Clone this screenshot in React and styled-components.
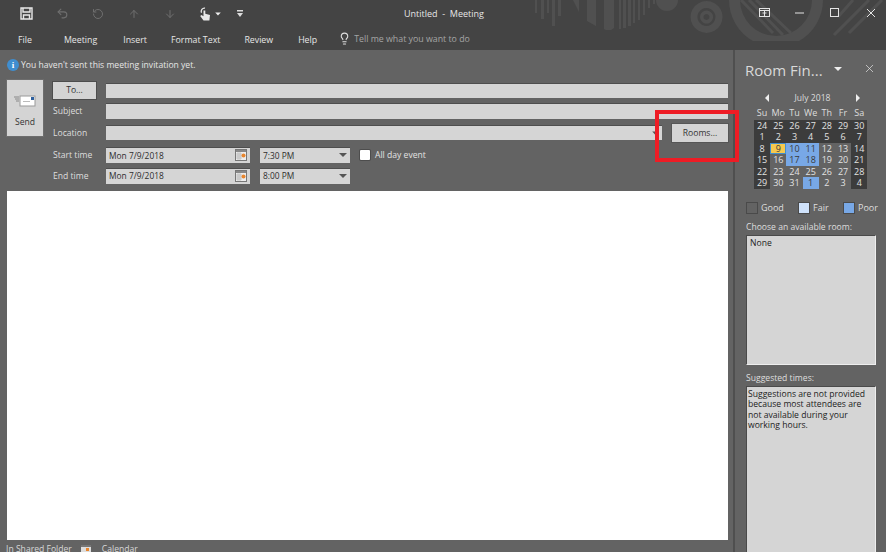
import React from "react";
import styled, { createGlobalStyle } from "styled-components";
import { ArrowUp, ArrowDown, Lightbulb, RotateCcw, Undo2, X } from "lucide-react";

const GlobalStyle = createGlobalStyle`
  html, body { margin: 0; padding: 0; background: #636363; }
  * { box-sizing: border-box; }
`;

const Window = styled.div`
  position: relative;
  width: 886px;
  height: 552px;
  overflow: hidden;
  display: flex;
  flex-direction: column;
  background: #636363;
  color: #e2e2e2;
  font-family: "Open Sans", "Noto Sans", sans-serif;
  font-size: 8.6px;
`;

const TitleBar = styled.div`
  position: relative;
  height: 27px;
  flex-shrink: 0;
  background: #444444;
  display: flex;
  align-items: center;
  padding-left: 19px;
`;

const QuickIcon = styled.span`
  position: relative;
  z-index: 1;
  display: flex;
  align-items: center;
  justify-content: center;
  width: ${(p) => p.$w || 36}px;
  margin-left: ${(p) => p.$ml || 0}px;
  color: ${(p) => (p.$off ? "#6f6f6f" : "#e4e4e4")};
`;

const Title = styled.div`
  position: absolute;
  left: 404px;
  top: 8px;
  font-size: 9px;
  line-height: 12px;
  color: #e6e6e6;
  white-space: pre;
`;

const Decoration = styled.svg`
  position: absolute;
  left: 530px;
  top: 0;
`;

const WindowButtons = styled.div`
  position: absolute;
  top: 5px;
  left: 757px;
  display: flex;
  color: #dcdcdc;
`;

const WindowButton = styled.span`
  width: 35.5px;
  height: 15px;
  display: flex;
  align-items: center;
  justify-content: flex-start;
  padding-left: 2px;
`;

const TabBar = styled.div`
  height: 23px;
  flex-shrink: 0;
  background: #444444;
  display: flex;
  align-items: center;
  padding-left: 18px;
  font-size: 8.8px;
`;

const Tab = styled.span`
  margin-right: ${(p) => p.$mr}px;
  color: #e6e6e6;
  position: relative;
  top: ${(p) => p.$top || 1}px;
`;

const TellMe = styled.span`
  display: flex;
  align-items: center;
  gap: 3px;
  color: #a5a5a5;
  svg { color: #e0e0e0; }
`;

const Main = styled.div`
  flex: 1;
  display: flex;
  min-height: 0;
`;

const Composer = styled.div`
  width: 733px;
  padding: 8px 5px 0 7px;
  display: flex;
  flex-direction: column;
  > * { flex-shrink: 0; }
`;

const Notice = styled.div`
  height: 14px;
  display: flex;
  align-items: center;
  gap: 2px;
  color: #e6e6e6;
`;

const InfoDot = styled.span`
  width: 12px;
  height: 12px;
  border-radius: 50%;
  background: #3f8ed0;
  color: #fff;
  font: bold 9px/12px "Liberation Serif", serif;
  text-align: center;
`;

const FormArea = styled.div`
  display: flex;
  gap: 10px;
  margin-top: 8px;
  height: 110px;
`;

const SendButton = styled.div`
  width: 36px;
  height: 56px;
  background: #d4d4d4;
  color: #333;
  display: flex;
  flex-direction: column;
  align-items: center;
  padding-top: 15px;
  gap: 9px;
  box-shadow: 0 0 0 1px #6d6d6d;
`;

const Rows = styled.div`
  flex: 1;
  display: flex;
  flex-direction: column;
`;

const Row = styled.div`
  height: ${(p) => p.$h}px;
  display: flex;
  align-items: center;
`;

const FieldLabel = styled.span`
  width: 53px;
  color: #dedede;
`;

const ToButton = styled.div`
  width: 43px;
  height: 17px;
  margin-right: 10px;
  background: #d4d4d4;
  color: #333;
  text-align: center;
  line-height: 16px;
  box-shadow: 0 0 0 1px #4d4d4d;
`;

const Input = styled.div`
  flex: ${(p) => (p.$w ? "none" : 1)};
  width: ${(p) => (p.$w ? `${p.$w}px` : "auto")};
  height: ${(p) => p.$h || 15}px;
  background: #d5d5d5;
  color: #2e2e2e;
  border-top: 1px solid #4e4e4e;
  display: flex;
  align-items: center;
  justify-content: space-between;
  padding: 0 3px 1px;
  font-size: 8.4px;
  margin-right: ${(p) => p.$mr || 0}px;
`;

const RoomsButton = styled.div`
  width: 56px;
  height: 18px;
  background: #d4d4d4;
  color: #333;
  text-align: center;
  line-height: 19px;
  box-shadow: 0 0 0 1px #565656;
`;

const Caret = styled.span`
  width: 0;
  height: 0;
  border-left: 4px solid transparent;
  border-right: 4px solid transparent;
  border-top: 4px solid #555;
`;

const CheckBox = styled.span`
  width: 10px;
  height: 10px;
  background: #fff;
  border-radius: 1px;
  box-shadow: 0 0 0 1px #4d4d4d;
  margin-right: 5px;
`;

const Body = styled.div`
  width: 721px;
  height: 349px;
  margin-top: 1px;
  background: #fff;
`;

const StatusBar = styled.div`
  display: flex;
  align-items: center;
  height: 12px;
  margin-top: 3px;
  margin-left: -1px;
  color: #d8d8d8;
  gap: 9px;
`;

const CalendarLabel = styled.span`
  margin-left: 2px;
`;

const Side = styled.div`
  flex: 1;
  border-left: 2px solid #4f4f4f;
  padding: 0 10px 0 10px;
  display: flex;
  flex-direction: column;
  > * { flex-shrink: 0; }
`;

const SideHead = styled.div`
  height: 38px;
  padding-top: 2px;
  display: flex;
  align-items: center;
  font-size: 15px;
  color: #d9d9d9;
  white-space: nowrap;
`;

const SideActions = styled.span`
  display: flex;
  align-items: center;
  gap: 21px;
  color: #e6e6e6;
  margin: -3px 0 0 11px;
`;

const WhiteCaret = styled.span`
  width: 0;
  height: 0;
  border-left: 4px solid transparent;
  border-right: 4px solid transparent;
  border-top: 4px solid #eee;
`;

const MonthNav = styled.div`
  height: 15px;
  margin: 2px 0 3px 9px;
  width: 113px;
  display: flex;
  align-items: center;
  justify-content: space-between;
  padding: 0 7px 0 11px;
  color: #dcdcdc;
`;

const NavArrow = styled.span`
  width: 0;
  height: 0;
  border-top: 4px solid transparent;
  border-bottom: 4px solid transparent;
  ${(p) => (p.$right ? "border-left: 4px solid #eee;" : "border-right: 4px solid #eee;")}
`;

const CalGrid = styled.div`
  margin-left: 9px;
  width: 114px;
  display: grid;
  grid-template-columns: repeat(7, 16.2px);
  grid-auto-rows: 11.5px;
  text-align: center;
  line-height: 11.5px;
  font-size: 9px;
`;

const WeekDay = styled.span`
  color: #dedede;
  margin-top: -1px;
`;

const cellBg = { dark: "#3c3c3c", grey: "#636363", blue: "#78a8e6", today: "#f5c94f" };
const cellFg = { dark: "#e2e2e2", grey: "#e2e2e2", blue: "#3a3a3a", today: "#3a3a3a" };

const Cell = styled.span`
  background: ${(p) => cellBg[p.$kind]};
  color: ${(p) => cellFg[p.$kind]};
  ${(p) => p.$kind === "today" && "box-shadow: inset 0 0 0 1px #3f8ed0;"}
`;

const Legend = styled.div`
  display: flex;
  align-items: center;
  height: 14px;
  margin-top: 12px;
  margin-left: 1px;
  font-size: 9px;
`;

const Swatch = styled.span`
  width: 12px;
  height: 12px;
  background: ${(p) => p.$bg};
  border: 1px solid #4a4a4a;
  margin-right: ${(p) => p.$gap}px;
`;

const LegendText = styled.span`
  width: ${(p) => p.$w}px;
  color: #dedede;
`;

const SideLabel = styled.div`
  height: 12px;
  line-height: 12px;
  color: #dedede;
  margin-top: ${(p) => p.$mt}px;
  margin-left: 1px;
`;

const ListBox = styled.div`
  height: ${(p) => p.$h}px;
  width: 130px;
  margin-top: 2px;
  margin-left: 1px;
  background: #d5d5d5;
  color: #222;
  border: 1px solid #4a4a4a;
  border-right-color: #eee;
  border-bottom-color: #eee;
  padding: ${(p) => p.$pad};
  line-height: 10.5px;
`;

const Highlight = styled.div`
  position: absolute;
  left: 655px;
  top: 110px;
  width: 84px;
  height: 52px;
  border: 4px solid #ee1c25;
`;

const CalIcon = () => (
  <svg width="12" height="12" viewBox="0 0 12 12">
    <rect x="0.5" y="0.5" width="11" height="11" fill="#eee" stroke="#777" />
    <rect x="1" y="1" width="10" height="2" fill="#888" />
    <path d="M1 5h6M1 7h6M1 9h6M3 3v8M5 3v8" stroke="#aaa" strokeWidth="0.6" />
    <circle cx="8.5" cy="6.5" r="2" fill="#e8862e" />
  </svg>
);

const weeks = [
  [24, 25, 26, 27, 28, 29, 30],
  [1, 2, 3, 4, 5, 6, 7],
  [8, 9, 10, 11, 12, 13, 14],
  [15, 16, 17, 18, 19, 20, 21],
  [22, 23, 24, 25, 26, 27, 28],
  [29, 30, 31, 1, 2, 3, 4],
];

const kindOf = (r, c) => {
  if (r < 2 || c === 0 || c === 6) return "dark";
  if (r === 2 && c === 1) return "today";
  if ((r === 2 || r === 3) && (c === 2 || c === 3)) return "blue";
  if (r === 5 && c === 3) return "blue";
  return "grey";
};

const App = () => (
  <Window>
    <GlobalStyle />
    <TitleBar>
      <Decoration width="356" height="50" viewBox="0 0 356 50" fill="#505050">
        <path d="M5 0h2v13H5zM11 0h3v19h-3zM17 0h2v13h-2zM22 0h3v26h-3zM28 0h3v16h-3z" />
        <path d="M43 0h6v12zM57 0h9v26l-9-5z" />
        <path d="M74 0h10v28l-3 2h-5l-2-1zM89 0h2v29h-2zM93 0h3v28h-3zM98 0h3v26h-3zM103 0h2v23h-2zM108 0h2v20h-2zM113 0h2v15h-2zM118 0h2v8h-2zM123 0h2v4h-2z" />
        <path d="M126 0h22a11 11 0 0 1-22 0z" />
        <path
          d="M176.5 1a16 16 0 1 0 .1 0zM176.5 8a9 9 0 1 1-.1 0zM176.5 10.500a6.500 6.500 0 1 0 .1 0zM176.500 14a3 3 0 1 1-.1 0z"
          fillRule="evenodd"
        />
        <path
          d="M199 0h11a36 36 0 0 0 72 0h11a47 47 0 0 1-24 41h-46a47 47 0 0 1-24-41z"
        />
        <path
          d="M211 0l32 33M219 0l34 35M226 0l35 33M304 35l35-35M319 33l33-33M308 17l15-17"
          stroke="#505050"
          strokeWidth="3"
          fill="none"
        />
      </Decoration>
      <QuickIcon $w={14}>
        <svg width="13" height="13" viewBox="0 0 13 13" fill="none" stroke="#e8e8e8" strokeWidth="1.4">
          <path d="M1 1h11v11H1z" />
          <path d="M3 1v4h7V1M3.500 12V8h6v4" />
        </svg>
      </QuickIcon>
      <QuickIcon $off $w={14} $ml={22}><Undo2 size={13} /></QuickIcon>
      <QuickIcon $off $w={14} $ml={22}><RotateCcw size={12} /></QuickIcon>
      <QuickIcon $off $w={14} $ml={22}><ArrowUp size={12} /></QuickIcon>
      <QuickIcon $off $w={14} $ml={22}><ArrowDown size={12} /></QuickIcon>
      <QuickIcon $w={14} $ml={21}>
        <svg width="12" height="14" viewBox="0 0 12 14">
          <path d="M6 1.200a3.200 3.200 0 0 0-3.500 4.500" fill="none" stroke="#e8e8e8" strokeWidth="1.300" />
          <path d="M4.500 3.500h1.800v3.300l4.700 1.200-.6 5.500H4.500L1.200 9l1.200-1 2.100 1.300z" fill="#e8e8e8" />
        </svg>
      </QuickIcon>
      <QuickIcon $w={8} $ml={2}><WhiteCaret style={{ transform: "scale(.7)" }} /></QuickIcon>
      <QuickIcon $w={6} $ml={15}>
        <svg width="6" height="7" viewBox="0 0 6 7" fill="#ddd">
          <path d="M0 0h6v1.500H0zM0 3h6L3 7z" />
        </svg>
      </QuickIcon>
      <Title>Untitled  -  Meeting</Title>
      <WindowButtons>
        <WindowButton>
          <svg width="12" height="10" viewBox="0 0 12 10" fill="none" stroke="#e4e4e4">
            <rect x="0.5" y="0.5" width="10" height="8" />
            <path d="M0.500 2.500h10M5.500 3v5M3.500 5h4" />
          </svg>
        </WindowButton>
        <WindowButton>
          <svg width="9" height="2" viewBox="0 0 9 2"><path d="M0 1h9" stroke="#e4e4e4" /></svg>
        </WindowButton>
        <WindowButton>
          <svg width="9" height="9" viewBox="0 0 9 9" fill="none" stroke="#e4e4e4"><rect x="0.5" y="0.5" width="8" height="8" /></svg>
        </WindowButton>
        <WindowButton>
          <svg width="10" height="10" viewBox="0 0 10 10" stroke="#e4e4e4"><path d="M1 1l8 8M9 1l-8 8" /></svg>
        </WindowButton>
      </WindowButtons>
    </TitleBar>
    <TabBar>
      <Tab $mr={32} $top={0}>File</Tab>
      <Tab $mr={26}>Meeting</Tab>
      <Tab $mr={24}>Insert</Tab>
      <Tab $mr={24}>Format Text</Tab>
      <Tab $mr={25}>Review</Tab>
      <Tab $mr={21}>Help</Tab>
      <TellMe><Lightbulb size={13} />Tell me what you want to do</TellMe>
    </TabBar>
    <Main>
      <Composer>
        <Notice>
          <InfoDot>i</InfoDot>
          You haven't sent this meeting invitation yet.
        </Notice>
        <FormArea>
          <SendButton>
            <svg width="22" height="12" viewBox="0 0 22 12">
              <path d="M0 2h5M1 4h4M2 6h3" stroke="#888" />
              <rect x="6" y="1" width="15" height="10" fill="#fff" stroke="#999" />
              <rect x="17" y="2" width="3" height="3" fill="#2c5f9e" />
              <rect x="9" y="6" width="7" height="1" fill="#bbb" />
            </svg>
            Send
          </SendButton>
          <Rows>
            <Row $h={20}>
              <ToButton>To...</ToButton>
              <Input $h={15} />
            </Row>
            <Row $h={22}>
              <FieldLabel>Subject</FieldLabel>
              <Input $h={16} />
            </Row>
            <Row $h={21}>
              <FieldLabel>Location</FieldLabel>
              <Input $h={15} $mr={10}>
                <span />
                <Caret style={{ transform: "scale(.7)" }} />
              </Input>
              <RoomsButton>Rooms...</RoomsButton>
            </Row>
            <Row $h={24}>
              <FieldLabel>Start time</FieldLabel>
              <Input $w={144} $h={16} $mr={10}>Mon 7/9/2018<CalIcon /></Input>
              <Input $w={90} $h={16} $mr={10}>7:30 PM<Caret /></Input>
              <CheckBox />
              All day event
            </Row>
            <Row $h={17}>
              <FieldLabel>End time</FieldLabel>
              <Input $w={144} $h={16} $mr={10}>Mon 7/9/2018<CalIcon /></Input>
              <Input $w={90} $h={16}>8:00 PM<Caret /></Input>
            </Row>
          </Rows>
        </FormArea>
        <Body />
        <StatusBar>
          In Shared Folder
          <svg width="10" height="8" viewBox="0 0 10 8">
            <rect width="10" height="8" fill="#ddd" />
            <rect y="0" width="10" height="2" fill="#777" />
            <rect x="5" y="3" width="3" height="3" fill="#e8862e" />
          </svg>
          <CalendarLabel>Calendar</CalendarLabel>
        </StatusBar>
      </Composer>
      <Side>
        <SideHead>
          Room Fin...
          <SideActions>
            <WhiteCaret />
            <X size={13} strokeWidth={1.3} />
          </SideActions>
        </SideHead>
        <MonthNav>
          <NavArrow />
          July 2018
          <NavArrow $right />
        </MonthNav>
        <CalGrid>
          {["Su", "Mo", "Tu", "We", "Th", "Fr", "Sa"].map((d) => (
            <WeekDay key={d}>{d}</WeekDay>
          ))}
          {weeks.map((w, r) =>
            w.map((n, c) => (
              <Cell key={`${r}-${c}`} $kind={kindOf(r, c)}>{n}</Cell>
            ))
          )}
        </CalGrid>
        <Legend>
          <Swatch $bg="#636363" $gap={3} />
          <LegendText $w={37}>Good</LegendText>
          <Swatch $bg="#cfe2fb" $gap={3} />
          <LegendText $w={30}>Fair</LegendText>
          <Swatch $bg="#78a8e6" $gap={3} />
          <LegendText $w={20}>Poor</LegendText>
        </Legend>
        <SideLabel $mt={6}>Choose an available room:</SideLabel>
        <ListBox $h={130} $pad="2px 3px">None</ListBox>
        <SideLabel $mt={7}>Suggested times:</SideLabel>
        <ListBox $h={170} $pad="2px 1px">
          Suggestions are not provided because most attendees are not available during your working hours.
        </ListBox>
      </Side>
    </Main>
    <Highlight />
  </Window>
);

export default App;
